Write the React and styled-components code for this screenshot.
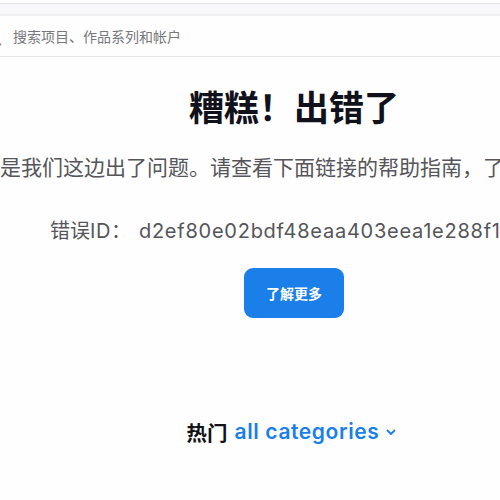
import React from 'react'
import styled, { createGlobalStyle } from 'styled-components'

const GlobalStyle = createGlobalStyle`
  html, body {
    margin: 0;
    padding: 0;
    background: #fefefe;
    overflow: hidden;
  }
  body {
    font-family: Inter, "Noto Sans CJK SC", sans-serif;
  }
`

const App = () => {
  return (
    <Page>
      <GlobalStyle />
      <TopEdge />
      <Band />
      <SearchBar>
        <SearchIcon viewBox="0 0 24 24">
          <circle cx="10" cy="10" r="7" />
          <line x1="15.5" y1="15.5" x2="21" y2="21" />
        </SearchIcon>
        <SearchText>搜索项目、作品系列和帐户</SearchText>
      </SearchBar>

      <Main>
        <Title>糟糕！出错了</Title>
        <Message>是我们这边出了问题。请查看下面链接的帮助指南，了解更多信息。</Message>
        <ErrorLine>
          <ErrorLabel>错误<Latin>ID</Latin>：</ErrorLabel>
          <ErrorCode>d2ef80e02bdf48eaa403eea1e288f1a6</ErrorCode>
        </ErrorLine>
        <MoreButton>了解更多</MoreButton>
        <Popular>
          <PopularLabel>热门</PopularLabel>
          <CategoryPicker>
            all categories
            <Chevron viewBox="0 0 12 12">
              <path d="M2.5 4.5 L6 8 L9.5 4.5" />
            </Chevron>
          </CategoryPicker>
        </Popular>
      </Main>
    </Page>
  )
}

export default App

const Page = styled.div`
  width: 500px;
  height: 500px;
  overflow: hidden;
  background: #fefefe;
`

const TopEdge = styled.div`
  height: 3px;
  background: #fdfdfd;
  border-bottom: 1px solid #e6e5ea;
`

const Band = styled.div`
  height: 10px;
  background: #f8f7fa;
  border-bottom: 2px solid #efeef1;
`

const SearchBar = styled.div`
  height: 40px;
  display: flex;
  align-items: center;
  gap: 10px;
  background: #fefefe;
  border-bottom: 1px solid #e7e7ea;
`

const SearchIcon = styled.svg`
  width: 20px;
  height: 20px;
  margin-left: -17px;
  margin-top: 2px;
  fill: none;
  stroke: #8a8a8f;
  stroke-width: 2;
  stroke-linecap: round;
`

const SearchText = styled.span`
  font-family: "Noto Sans CJK SC", sans-serif;
  font-size: 14px;
  color: #77777c;
`

const Main = styled.main`
  width: 588px;
  display: flex;
  flex-direction: column;
  align-items: center;
`

const Title = styled.h1`
  margin: 28px 0 0;
  font-family: "Noto Sans CJK SC", sans-serif;
  font-size: 35px;
  line-height: 41px;
  font-weight: 700;
  color: #10111a;
`

const Message = styled.p`
  align-self: flex-start;
  margin: 25px 0 0;
  font-family: "Noto Sans CJK SC", sans-serif;
  font-size: 21px;
  line-height: 30px;
  color: #55555a;
  white-space: nowrap;
`

const ErrorLine = styled.div`
  margin: 34px 12px 0 0;
  display: flex;
  align-items: center;
  gap: 8px;
  white-space: nowrap;
  line-height: 30px;
  color: #55555a;
`

const ErrorLabel = styled.span`
  font-family: "Noto Sans CJK SC", sans-serif;
  font-size: 20px;
`

const Latin = styled.span`
  font-family: Inter, sans-serif;
  letter-spacing: 0.5px;
`

const ErrorCode = styled.span`
  font-family: Inter, sans-serif;
  font-size: 20px;
  font-weight: 400;
  letter-spacing: 0.75px;
`

const MoreButton = styled.button`
  margin-top: 22px;
  width: 100px;
  height: 50px;
  border: none;
  border-radius: 9px;
  background: #1b7fea;
  color: #ffffff;
  font-family: "Noto Sans CJK SC", sans-serif;
  font-size: 14px;
  font-weight: 700;
  cursor: pointer;
`

const Popular = styled.div`
  margin: 99px 4px 0 0;
  display: flex;
  align-items: center;
  gap: 7px;
  line-height: 30px;
`

const PopularLabel = styled.span`
  font-family: "Noto Sans CJK SC", sans-serif;
  font-size: 20.5px;
  font-weight: 700;
  color: #111116;
`

const CategoryPicker = styled.span`
  display: flex;
  align-items: center;
  gap: 6px;
  font-family: Inter, sans-serif;
  font-size: 21px;
  font-weight: 600;
  letter-spacing: 0.6px;
  color: #1b7fea;
`

const Chevron = styled.svg`
  width: 12px;
  height: 12px;
  fill: none;
  stroke: #1b7fea;
  stroke-width: 1.8;
  stroke-linecap: round;
  stroke-linejoin: round;
`
